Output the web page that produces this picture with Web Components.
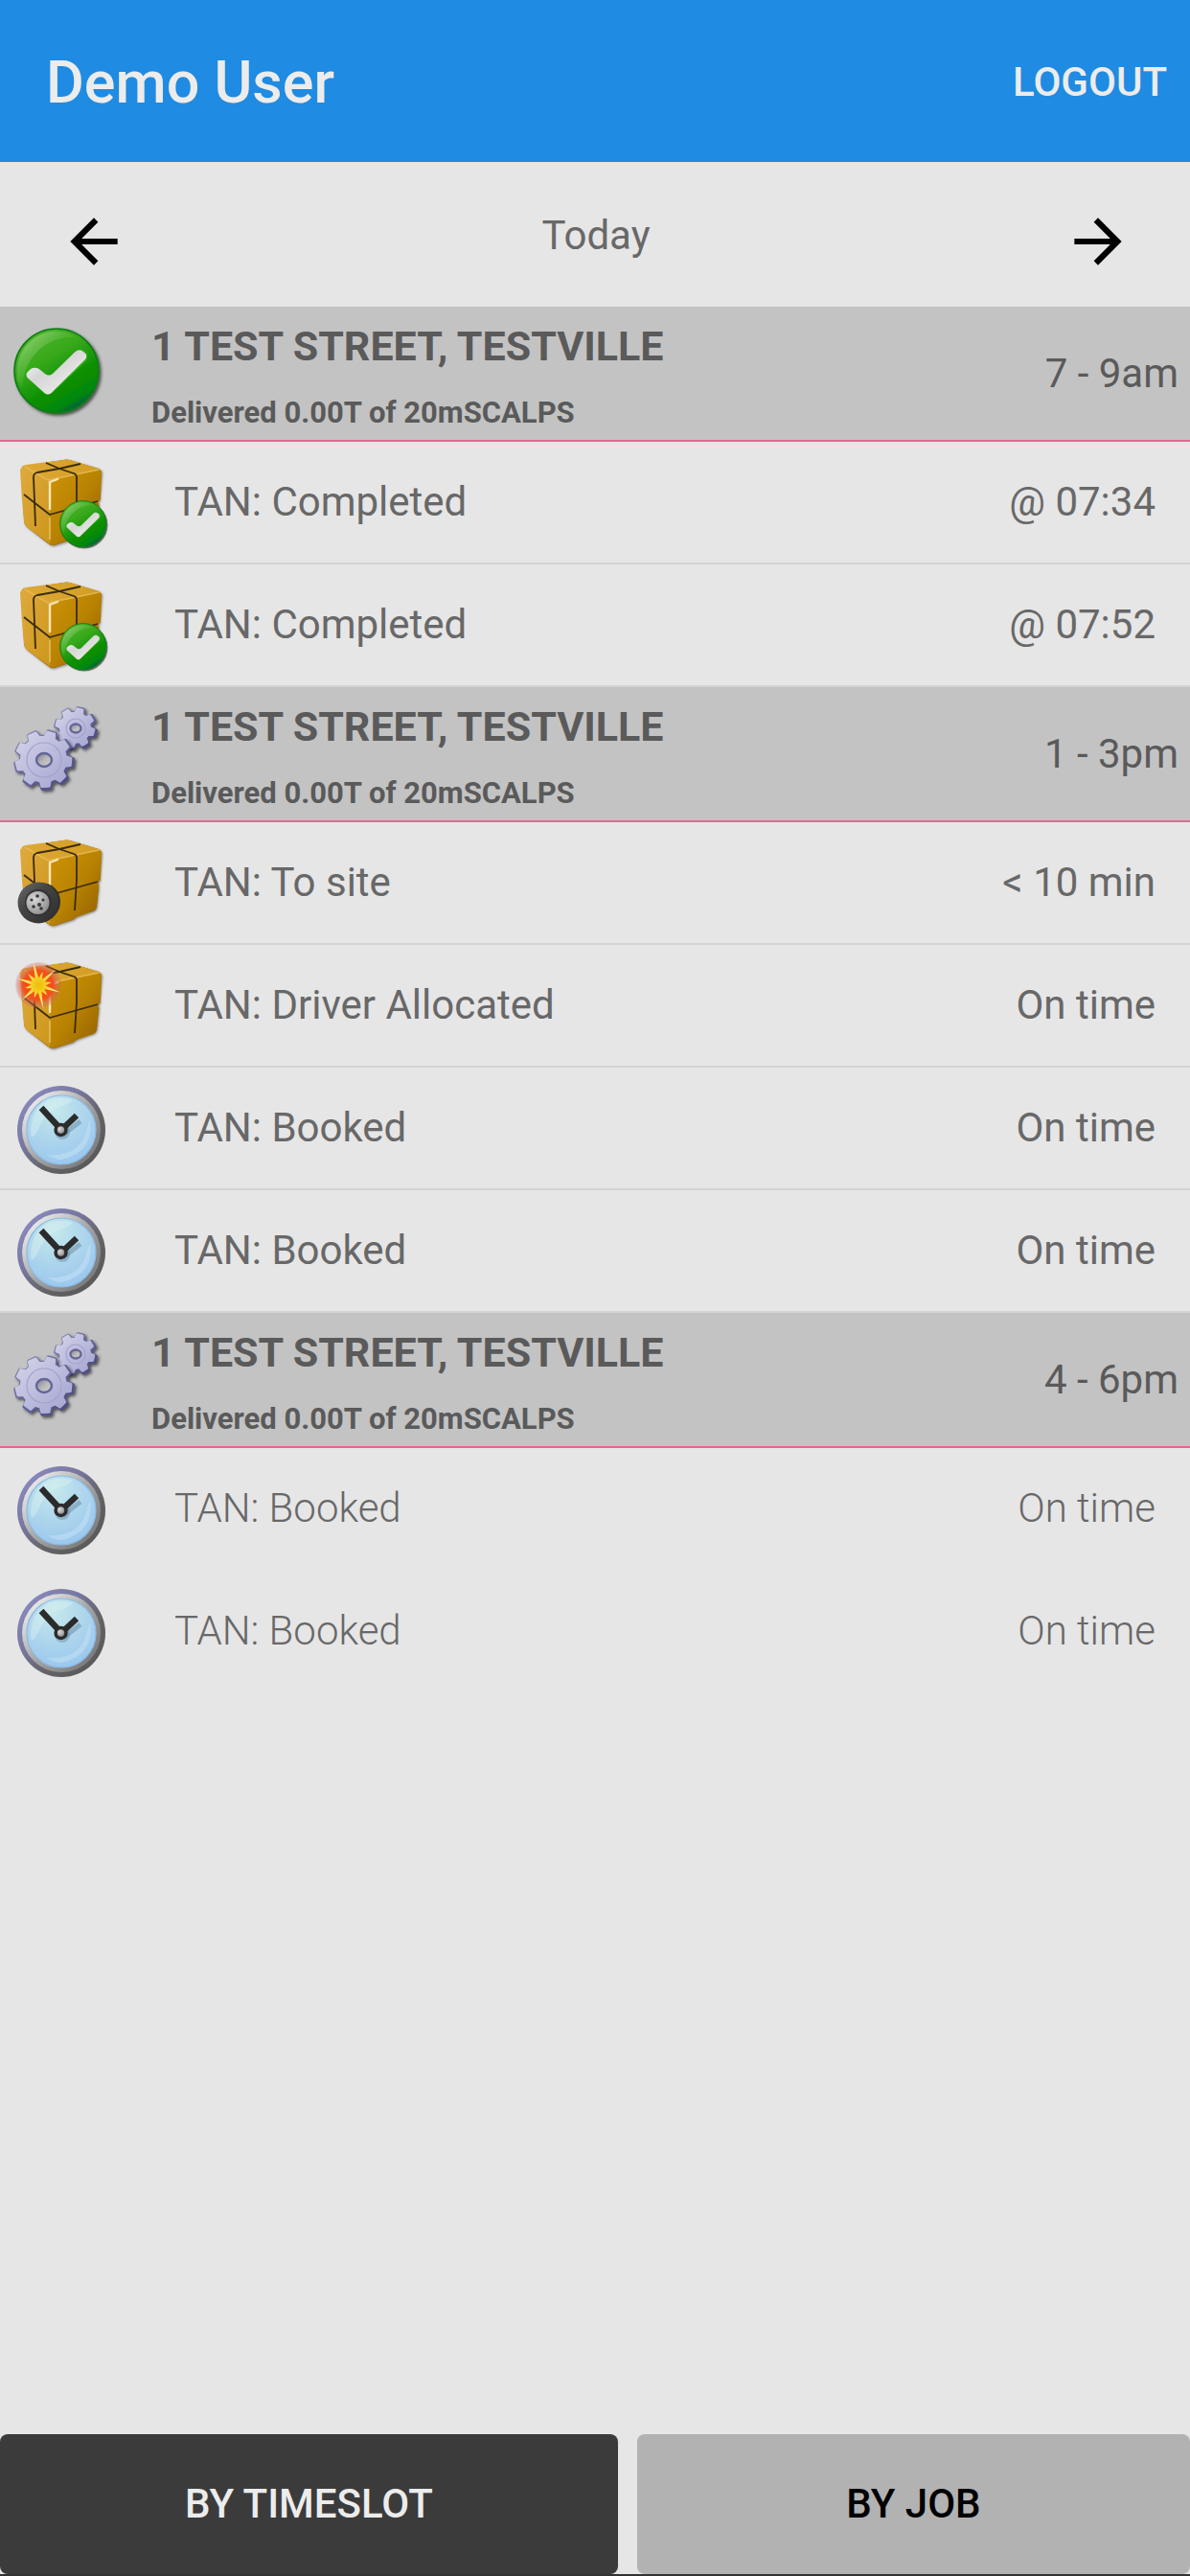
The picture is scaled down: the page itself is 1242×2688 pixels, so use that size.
<!DOCTYPE html>
<html lang="en">
<head>
<meta charset="utf-8">
<meta name="viewport" content="width=device-width, initial-scale=1">
<title>Deliveries</title>
<style>
  body {
    margin: 0;
    background: #e6e6e6;
    color: #686868;
    font-family: Roboto, "Liberation Sans", sans-serif;
    font-size: 42px;
    line-height: 52px;
  }
</style>
</head>
<body>
<delivery-app>
  <app-bar slot="top" heading="Demo User"></app-bar>
  <day-nav slot="top">Today</day-nav>

  <job-group icon="done" time="7 - 9am">
    <span slot="address">1 TEST STREET, TESTVILLE</span>
    <span slot="summary">Delivered 0.00T of 20mSCALPS</span>
    <load-row icon="box-done" status="@ 07:34">TAN: Completed</load-row>
    <load-row icon="box-done" status="@ 07:52">TAN: Completed</load-row>
  </job-group>

  <job-group icon="gears" time="1 - 3pm">
    <span slot="address">1 TEST STREET, TESTVILLE</span>
    <span slot="summary">Delivered 0.00T of 20mSCALPS</span>
    <load-row icon="box-wheel" status="&lt; 10 min">TAN: To site</load-row>
    <load-row icon="box-new" status="On time">TAN: Driver Allocated</load-row>
    <load-row icon="clock" status="On time">TAN: Booked</load-row>
    <load-row icon="clock" status="On time">TAN: Booked</load-row>
  </job-group>

  <job-group icon="gears" time="4 - 6pm" plain>
    <span slot="address">1 TEST STREET, TESTVILLE</span>
    <span slot="summary">Delivered 0.00T of 20mSCALPS</span>
    <load-row icon="clock" status="On time">TAN: Booked</load-row>
    <load-row icon="clock" status="On time">TAN: Booked</load-row>
  </job-group>

  <view-switch slot="bottom"></view-switch>
</delivery-app>

<script>
// Gear outline: n teeth between radius r and R, centred on cx, cy.
function gearPath(cx, cy, r, R, n, turn) {
  const step = (Math.PI * 2) / n;
  const points = [];
  for (let i = 0; i < n; i++) {
    const a = i * step + turn;
    [[r, -0.33], [R, -0.2], [R, 0.2], [r, 0.33]].forEach(([d, k]) => {
      const t = a + k * step;
      points.push(`${(cx + d * Math.cos(t)).toFixed(1)} ${(cy + d * Math.sin(t)).toFixed(1)}`);
    });
  }
  return `M${points.join("L")}Z`;
}

// Star outline, one ray for each length in the list.
function starPath(cx, cy, rays, inner) {
  const step = (Math.PI * 2) / rays.length;
  const points = [];
  rays.forEach((R, i) => {
    const a = i * step - 1.78;
    points.push(`${(cx + R * Math.cos(a)).toFixed(1)} ${(cy + R * Math.sin(a)).toFixed(1)}`);
    points.push(`${(cx + inner * Math.cos(a + step / 2)).toFixed(1)} ${(cy + inner * Math.sin(a + step / 2)).toFixed(1)}`);
  });
  return `M${points.join("L")}Z`;
}

const DEFS = `
  <defs>
    <linearGradient id="green" x1=".2" y1="0" x2=".8" y2="1">
      <stop offset="0" stop-color="#4fb52c"/><stop offset=".35" stop-color="#37a81b"/>
      <stop offset=".65" stop-color="#0a8f02"/><stop offset=".84" stop-color="#04880a"/>
      <stop offset=".9" stop-color="#066a35"/><stop offset="1" stop-color="#056a2c"/>
    </linearGradient>
    <linearGradient id="shine" x1="0" y1="0" x2=".7" y2=".7">
      <stop offset="0" stop-color="#a5dc8c"/><stop offset=".6" stop-color="#6fc052" stop-opacity=".4"/>
      <stop offset="1" stop-color="#37a81b" stop-opacity="0"/>
    </linearGradient>
    <linearGradient id="tick" x1="0" y1="0" x2="1" y2="1">
      <stop offset="0" stop-color="#fff"/><stop offset=".4" stop-color="#d6d6d6"/><stop offset="1" stop-color="#f5f5f5"/>
    </linearGradient>
    <linearGradient id="boxTop" x1="0" y1="0" x2="1" y2="0">
      <stop offset="0" stop-color="#dda936"/><stop offset="1" stop-color="#d39d24"/>
    </linearGradient>
    <linearGradient id="boxLeft" x1="0" y1="0" x2="1" y2="1">
      <stop offset="0" stop-color="#dfaa3d"/><stop offset="1" stop-color="#cd961c"/>
    </linearGradient>
    <linearGradient id="boxRight" x1="0" y1="0" x2="1" y2="1">
      <stop offset="0" stop-color="#ce9306"/><stop offset=".5" stop-color="#b88202"/><stop offset="1" stop-color="#8f5e00"/>
    </linearGradient>
    <linearGradient id="gear" x1="0" y1="0" x2="1" y2="1">
      <stop offset="0" stop-color="#d5d5ea"/><stop offset=".5" stop-color="#bcbcdd"/><stop offset="1" stop-color="#a3a3d0"/>
    </linearGradient>
    <linearGradient id="gearEdge" x1="0" y1="0" x2="1" y2="1">
      <stop offset="0" stop-color="#8686b6"/><stop offset="1" stop-color="#45457c"/>
    </linearGradient>
    <linearGradient id="gearHole" x1="0" y1="0" x2="1" y2="1">
      <stop offset="0" stop-color="#77778c"/><stop offset=".5" stop-color="#b9b9b9"/><stop offset="1" stop-color="#d0d0d4"/>
    </linearGradient>
    <linearGradient id="rim" x1=".1" y1=".1" x2=".9" y2=".9">
      <stop offset="0" stop-color="#8a8abf"/><stop offset=".35" stop-color="#77779f"/>
      <stop offset=".65" stop-color="#646468"/><stop offset="1" stop-color="#585858"/>
    </linearGradient>
    <linearGradient id="bezel" x1=".1" y1=".1" x2=".9" y2=".9">
      <stop offset="0" stop-color="#eee"/><stop offset=".5" stop-color="#a6a6a6"/><stop offset="1" stop-color="#777"/>
    </linearGradient>
    <radialGradient id="face" cx=".4" cy=".2" r=".85">
      <stop offset="0" stop-color="#c5e9ec"/><stop offset=".5" stop-color="#aed6ec"/><stop offset="1" stop-color="#98c6ee"/>
    </radialGradient>
    <radialGradient id="glow">
      <stop offset="0" stop-color="#ff4a08"/><stop offset=".65" stop-color="#f2501c"/>
      <stop offset=".8" stop-color="#d9624c" stop-opacity=".6"/><stop offset="1" stop-color="#c66" stop-opacity=".2"/>
    </radialGradient>
    <radialGradient id="burst">
      <stop offset="0" stop-color="#eebb08"/><stop offset=".3" stop-color="#f3cf22"/><stop offset=".7" stop-color="#fff07a"/>
    </radialGradient>
    <radialGradient id="hub" cx=".35" cy=".35" r=".7">
      <stop offset="0" stop-color="#d8d8d8"/><stop offset="1" stop-color="#909090"/>
    </radialGradient>
    <linearGradient id="tyre" x1="0" y1="0" x2="1" y2="1">
      <stop offset="0" stop-color="#6a6a6a"/><stop offset=".4" stop-color="#454545"/><stop offset="1" stop-color="#2b2b2b"/>
    </linearGradient>
    <filter id="soft" x="-20%" y="-20%" width="140%" height="140%">
      <feDropShadow dx="2" dy="2" stdDeviation="1.4" flood-color="#222" flood-opacity=".7"/>
    </filter>
    <filter id="faint" x="-20%" y="-20%" width="140%" height="140%">
      <feDropShadow dx="1" dy="1" stdDeviation="1" flood-color="#333" flood-opacity=".5"/>
    </filter>
  </defs>`;

// Green disc, drawn 90 wide around 45,45.
const BADGE = `
  <g filter="url(#soft)">
    <circle cx="45" cy="45" r="44" fill="url(#green)" stroke="#0f7d14" stroke-width="1.6"/>
  </g>
  <path d="M4 48A41 41 0 0 1 68 11C44 6 13 22 9 62Q4 57 4 48Z" fill="url(#shine)"/>
  <path d="M20 47L36 62L70 30" fill="none" stroke="#2fae12" stroke-width="15" stroke-linecap="round" stroke-linejoin="round"/>
  <path d="M14.500 52L33 68.500Q36 70.500 39 68.500L75 33Q78 28 73.500 25.500Q69 21 64 25.500L41 48Q37 51 33 48L26 42.500Q20 40 16 45Q12 48 14.500 52Z" fill="url(#tick)"/>`;

const BOX = `
  <g transform="translate(0 11)">
    <path d="M23 20Q22 16 26 15L66 9Q69 8 73 9L103 18Q107 20 106 24L104 49Q105 51 102 53Q104 55 103 58L101 78Q100 82 97 83L80 89L76 92L57 98Q53 99 50 96L28 79Q25 76 25 72L24 50Z" fill="#a17010" filter="url(#faint)"/>
    <path d="M23 19Q21 15 27 14L66 9Q69 8 73 9L103 18Q107 20 103 21L53 31Q50 32 47 30Z" fill="url(#boxTop)"/>
    <path d="M21 20Q21 16 25 18L50 30Q52 31 52 34V97Q51 96 50 95L28 79Q25 76 25 72L23 51Z" fill="url(#boxLeft)"/>
    <path d="M52 34Q52 31 55 30L102 20Q107 19 106 24L105 49Q105 51 102 53Q104 55 103 58L101 78Q100 82 97 83L80 88L77 91L57 97Q52 99 52 95Z" fill="url(#boxRight)"/>
    <path d="M26 16L50 30L103 19" fill="none" stroke="#e9bd5d" stroke-width="1.5" opacity=".7"/>
    <path d="M52 60V32L60 29" fill="none" stroke="#f7e6b8" stroke-width="2.4" stroke-linecap="round"/>
    <path d="M52 69V92" stroke="#e3bd62" stroke-width="1.6"/>
    <g fill="none" stroke="#3a2c0c" stroke-width="1.8" stroke-linejoin="round">
      <path d="M48 12L62 18L77 23Q80 24 80 27V50L78 82"/>
      <path d="M84 13L62 18L39 22Q35 23 35 27L36 51L37 78"/>
      <path d="M25 45L52 66L102 52"/>
    </g>
  </g>`;

const CLOCK = `
  <circle cx="64" cy="60" r="46" fill="url(#rim)"/>
  <circle cx="64" cy="60" r="41" fill="url(#bezel)"/>
  <circle cx="64" cy="60" r="36" fill="url(#face)" stroke="#8cbbe8" stroke-width="1.2"/>
  <path d="M32 65Q31 39 52 28Q68 25 76 29Q72 34 58 37Q47 42 39 61Q35 69 33 67Z" fill="#dcf2f2" opacity=".45"/>
  <path d="M94 49Q99 83 64 91Q57 91 49 86Q84 89 91 58Z" fill="#c3dff5" opacity=".6"/>
  <path d="M66 65L84 51" stroke="#6889a4" stroke-width="5" opacity=".5"/>
  <circle cx="65" cy="62" r="8" fill="#6889a4" opacity=".45"/>
  <path d="M43 37L64 60L80 45" fill="none" stroke="#2b2b2b" stroke-width="6.4"/>
  <circle cx="63.5" cy="60" r="7.2" fill="#2b2b2b"/>
  <circle cx="63.5" cy="60" r="3.7" fill="url(#hub)"/>`;

function gear(cx, cy, r, R, n, turn, hole) {
  return `
    <path d="${gearPath(cx, cy, r, R, n, turn)}" fill="url(#gear)" stroke="url(#gearEdge)" stroke-width="3" stroke-linejoin="round" filter="url(#soft)"/>
    <path d="${gearPath(cx - 0.6, cy - 0.8, r - 1.5, R - 1.5, n, turn)}" fill="url(#gear)" stroke="url(#gear)" stroke-width="2" stroke-linejoin="round"/>
    <circle cx="${cx}" cy="${cy}" r="${r - 7}" fill="none" stroke="#a3a3ce" stroke-width="1.2"/>
    <ellipse cx="${cx}" cy="${cy}" rx="${hole}" ry="${hole - 1}" fill="url(#gearHole)" stroke="#65659a" stroke-width="2.4"/>`;
}

const TYRE = `
  <circle cx="43" cy="84" r="20" fill="#2c2c2c"/>
  <circle cx="40" cy="85" r="21.5" fill="url(#tyre)"/>
  <circle cx="40" cy="85" r="14" fill="#333"/>
  <circle cx="39.5" cy="85" r="12" fill="url(#hub)"/>
  <g fill="#383838">
    <circle cx="39" cy="78" r="1.8"/><circle cx="45" cy="82" r="1.6"/><circle cx="33" cy="82" r="1.6"/>
    <circle cx="35" cy="89" r="1.8"/><circle cx="43" cy="91" r="1.8"/><circle cx="41" cy="87" r="2"/>
  </g>`;

const BURST = `
  <circle cx="40" cy="43" r="24" fill="url(#glow)"/>
  <path d="${starPath(40, 43, [25, 15, 24, 14, 24, 14, 25, 14, 23, 14, 23, 16], 7.5)}" fill="url(#burst)"/>`;

const ICONS = {
  "done": `<g transform="translate(14 16)">${BADGE}</g>`,
  "gears": gear(79, 37, 17, 21.5, 8, 0.25, 5.5) + gear(46, 70, 25, 30.5, 9, 0.1, 8),
  "box-done": `${BOX}<g transform="translate(62 62) scale(.55)">${BADGE}</g>`,
  "box-wheel": BOX + TYRE,
  "box-new": BOX + BURST,
  "clock": `<g transform="translate(0 6)">${CLOCK}</g>`,
};

class StatusIcon extends HTMLElement {
  connectedCallback() {
    this.attachShadow({ mode: "open" });
    this.shadowRoot.innerHTML = `
      <style>
        :host {
          display: block;
          width: 128px;
          height: 128px;
        }
        svg {
          display: block;
        }
      </style>
      <svg width="128" height="128" viewBox="0 0 128 128" aria-hidden="true">
        ${DEFS}${ICONS[this.getAttribute("name")]}
      </svg>
    `;
  }
}

class DeliveryApp extends HTMLElement {
  connectedCallback() {
    this.attachShadow({ mode: "open" });
    this.shadowRoot.innerHTML = `
      <style>
        :host {
          display: flex;
          flex-direction: column;
          min-height: 100vh;
        }
        main {
          flex: 1;
        }
      </style>
      <slot name="top"></slot>
      <main><slot></slot></main>
      <slot name="bottom"></slot>
    `;
  }
}

class AppBar extends HTMLElement {
  connectedCallback() {
    this.attachShadow({ mode: "open" });
    this.shadowRoot.innerHTML = `
      <style>
        :host {
          align-items: center;
          background: #1f8be2;
          box-sizing: border-box;
          color: #ececec;
          display: flex;
          height: 169px;
          justify-content: space-between;
          padding: 2px 24px 0 48px;
        }
        h1 {
          font-size: 61px;
          font-weight: 500;
          line-height: 72px;
          margin: 0;
        }
        button {
          background: none;
          border: 0;
          color: inherit;
          font: inherit;
          font-weight: 500;
          padding: 0;
        }
      </style>
      <h1>${this.getAttribute("heading")}</h1>
      <button type="button">LOGOUT</button>
    `;
  }
}

class DayNav extends HTMLElement {
  connectedCallback() {
    this.attachShadow({ mode: "open" });
    this.shadowRoot.innerHTML = `
      <style>
        :host {
          align-items: center;
          box-sizing: border-box;
          display: flex;
          height: 151px;
          justify-content: space-between;
          padding: 2px 59px 0 61px;
        }
        button {
          background: none;
          border: 0;
          color: #000;
          padding: 12px 0 0;
        }
        svg {
          display: block;
        }
      </style>
      <button type="button" aria-label="Previous day">
        <svg width="74" height="74" viewBox="0 0 24 24"><path fill="currentColor" d="M20 11H7.83l5.59-5.59L12 4l-8 8 8 8 1.41-1.41L7.83 13H20v-2z"/></svg>
      </button>
      <slot></slot>
      <button type="button" aria-label="Next day">
        <svg width="74" height="74" viewBox="0 0 24 24"><path fill="currentColor" d="M12 4l-1.41 1.41L16.17 11H4v2h12.17l-5.58 5.59L12 20l8-8z"/></svg>
      </button>
    `;
  }
}

class JobGroup extends HTMLElement {
  connectedCallback() {
    this.attachShadow({ mode: "open" });
    this.shadowRoot.innerHTML = `
      <style>
        :host {
          display: block;
        }
        /* plain groups list their loads in light text with no dividers */
        :host([plain]) {
          --row-line: transparent;
          --row-weight: 300;
        }
        header {
          align-items: center;
          background: #c3c3c3;
          border-bottom: 2px solid #e2688f;
          box-sizing: border-box;
          color: #5a5a5a;
          display: flex;
          height: 141px;
          padding-right: 12px;
        }
        .job {
          flex: 1;
          font-weight: bold;
          margin-left: 30px;
          padding-top: 4px;
        }
        h2 {
          font: inherit;
          font-size: 43px;
          line-height: 56px;
          margin: 0 0 22px;
        }
        p {
          font-size: 31px;
          line-height: 40px;
          margin: 0;
        }
      </style>
      <header>
        <status-icon name="${this.getAttribute("icon")}"></status-icon>
        <div class="job">
          <h2><slot name="address"></slot></h2>
          <p><slot name="summary"></slot></p>
        </div>
        <time>${this.getAttribute("time")}</time>
      </header>
      <slot></slot>
    `;
  }
}

class LoadRow extends HTMLElement {
  connectedCallback() {
    this.attachShadow({ mode: "open" });
    this.shadowRoot.innerHTML = `
      <style>
        :host {
          align-items: center;
          border-bottom: 2px solid var(--row-line, #d3d3d3);
          box-sizing: border-box;
          display: flex;
          font-weight: var(--row-weight, 400);
          height: 128px;
          padding-right: 36px;
        }
        .load {
          flex: 1;
          margin-left: 54px;
        }
      </style>
      <status-icon name="${this.getAttribute("icon")}"></status-icon>
      <span class="load"><slot></slot></span>
      <span class="status"></span>
    `;
    this.shadowRoot.querySelector(".status").textContent = this.getAttribute("status");
  }
}

class ViewSwitch extends HTMLElement {
  connectedCallback() {
    this.attachShadow({ mode: "open" });
    this.shadowRoot.innerHTML = `
      <style>
        :host {
          border-bottom: 2px solid #333;
          display: flex;
          gap: 20px;
        }
        button {
          background: #b2b2b2;
          border: 0;
          border-radius: 8px;
          color: #000;
          flex: 577;
          font: inherit;
          font-weight: 500;
          height: 146px;
          padding: 0;
        }
        button[aria-pressed="true"] {
          background: #3b3b3b;
          color: #ececec;
          flex: 645;
        }
      </style>
      <button type="button" aria-pressed="true">BY TIMESLOT</button>
      <button type="button" aria-pressed="false">BY JOB</button>
    `;
  }
}

customElements.define("status-icon", StatusIcon);
customElements.define("delivery-app", DeliveryApp);
customElements.define("app-bar", AppBar);
customElements.define("day-nav", DayNav);
customElements.define("job-group", JobGroup);
customElements.define("load-row", LoadRow);
customElements.define("view-switch", ViewSwitch);
</script>
</body>
</html>
